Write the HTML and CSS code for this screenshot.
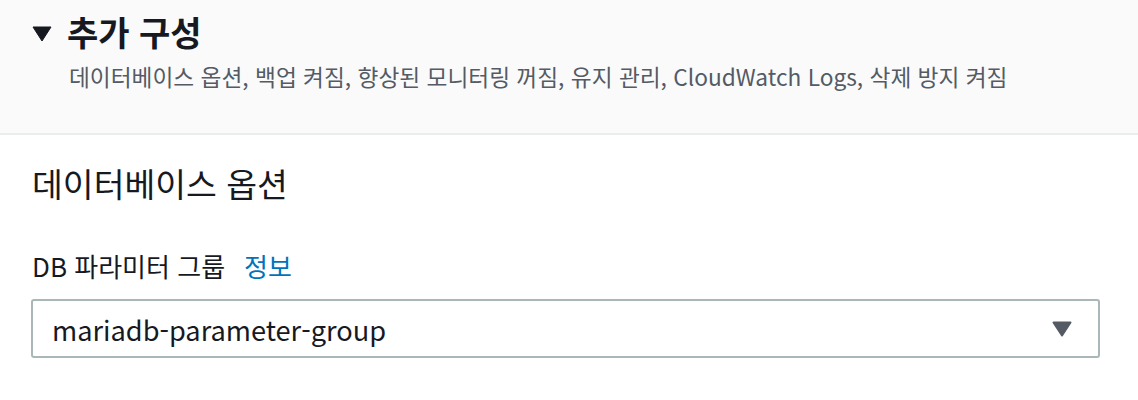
FILE: index.html
```html
<!DOCTYPE html>
<html lang="ko">
<head>
<meta charset="utf-8">
<link rel="stylesheet" href="styles.css">
</head>
<body>
<section class="panel">
  <header class="panel-header">
    <div class="title-row">
      <svg class="caret" width="20" height="16" viewBox="0 0 20 16"><polygon points="1,1 19,1 10,15" fill="#16191f" stroke="#16191f" stroke-width="1" stroke-linejoin="round"/></svg>
      <h2 class="title">추가 구성</h2>
    </div>
    <p class="subtitle">데이터베이스 옵션, 백업 켜짐, 향상된 모니터링 꺼짐, 유지 관리, CloudWatch Logs, 삭제 방지 켜짐</p>
  </header>
  <div class="panel-body">
    <h3 class="section-title">데이터베이스 옵션</h3>
    <div class="field">
      <div class="label-row">
        <span class="label">DB 파라미터 그룹</span>
        <a class="info" href="#">정보</a>
      </div>
      <div class="select">
        <span class="select-value">mariadb-parameter-group</span>
        <svg class="select-arrow" width="20" height="16" viewBox="0 0 20 16"><polygon points="1.5,1.5 18.5,1.5 10,14.5" fill="#545b64" stroke="#545b64" stroke-width="2" stroke-linejoin="round"/></svg>
      </div>
    </div>
  </div>
</section>
</body>
</html>
```

FILE: styles.css
```css
html, body {
  margin: 0;
  padding: 0;
  background: #ffffff;
}
body {
  font-family: "Noto Sans CJK KR", "Open Sans", sans-serif;
  color: #16191f;
}
.panel-header {
  background: #fafafa;
  border-bottom: 2px solid #eaeded;
  height: 135px;
  box-sizing: border-box;
  padding: 12px 32px 0 32px;
}
.title-row {
  display: flex;
  align-items: center;
  gap: 15px;
}
.caret {
  display: block;
  margin-top: 3px;
}
.title {
  margin: 0;
  font-size: 34px;
  font-weight: 700;
  line-height: 40px;
  color: #16191f;
}
.subtitle {
  margin: 10px 0 0 37px;
  font-size: 22.7px;
  line-height: 30px;
  color: #545b64;
}
.panel-body {
  padding: 28px 32px 0 32px;
}
.section-title {
  margin: 0;
  font-size: 33.5px;
  font-weight: 400;
  line-height: 40px;
}
.field {
  margin-top: 47px;
}
.label-row {
  display: flex;
  align-items: baseline;
  gap: 19px;
  font-size: 26px;
  line-height: 32px;
}
.info {
  color: #0073bb;
  text-decoration: none;
}
.select {
  margin-top: 17px;
  margin-left: -1px;
  width: 1069px;
  height: 59px;
  box-sizing: border-box;
  border: 2px solid #aab7b8;
  border-radius: 3px;
  display: flex;
  align-items: center;
  justify-content: space-between;
  padding: 0 26px 0 19px;
}
.select-value {
  font-size: 27.2px;
  line-height: 40px;
}
.select-arrow {
  display: block;
}
```
